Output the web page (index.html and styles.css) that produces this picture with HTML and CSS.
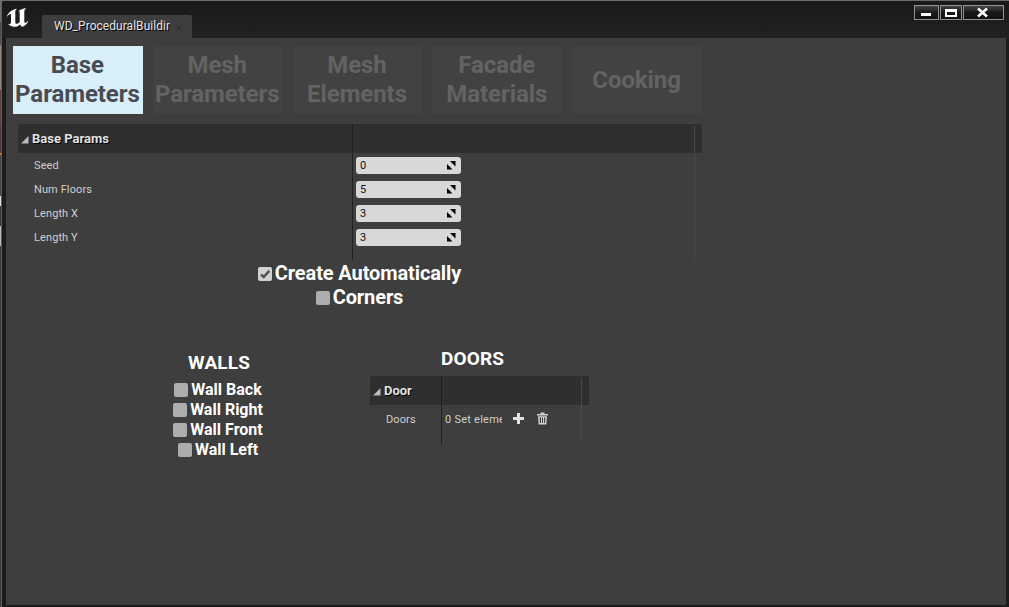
FILE: index.html
```html
<!DOCTYPE html>
<html lang="en">
<head>
<meta charset="utf-8">
<title>WD_ProceduralBuilding</title>
<link rel="stylesheet" href="styles.css">
</head>
<body>
<div class="desktop">
<div class="window">
  <header class="titlebar">
    <svg class="logo" width="24" height="22" viewBox="0 0 24 22"><path fill="#fff" d="M.5 9.500C2 4.500 6 1.500 11 .8C9 2.500 9.300 3.500 9.300 5V14.500C9.300 16.300 11.800 16.300 13.700 14V4.500C13.700 3.300 13 3 12 3.500C14 1.500 17 .5 20.500 0C18.500 1.500 18.300 2.500 18.300 4V13.500C18.300 15.500 20 15.300 22.500 12.500C21.500 15.500 19 18 16 19L14 16.500C12 18.500 9.500 19.300 6.500 18.600C4.500 18 3.500 17 2 16C4.300 16.300 5 15.500 5 13.500V7C5 4.800 2.500 6.500 .5 9.500Z"/></svg>
    <div class="doc-tab"><span class="doc-name">WD_ProceduralBuilding</span>
      <svg class="doc-close" width="6" height="6" viewBox="0 0 6 6"><path d="M.5 .5L5.500 5.500M5.500 .5L.5 5.500"/></svg>
    </div>
    <div class="controls">
      <div class="control"><svg width="24" height="15" viewBox="0 0 24 15"><path fill="#fff" d="M7 8h10v3H7z"/></svg></div>
      <div class="control control-max"><svg width="21" height="15" viewBox="0 0 21 15"><path fill="#fff" fill-rule="evenodd" d="M5 4h12v8H5zM7 7v3h8V7z"/></svg></div>
      <div class="control control-close"><svg width="40" height="15" viewBox="0 0 40 15"><path fill="none" stroke="#fff" stroke-width="2.600" d="M15 3.500L24 11.500M24 3.500L15 11.500"/></svg></div>
    </div>
  </header>
  <main class="content">
    <nav class="tabs">
      <div class="tab active">Base<br>Parameters</div>
      <div class="tab">Mesh<br>Parameters</div>
      <div class="tab">Mesh<br>Elements</div>
      <div class="tab">Facade<br>Materials</div>
      <div class="tab">Cooking</div>
    </nav>
    <section class="details base">
      <div class="details-header"><svg class="arrow" width="8" height="8" viewBox="0 0 8 8"><path d="M7.500 0V7.500H0z"/></svg><span>Base Params</span></div>
      <div class="row"><span class="label">Seed</span><div class="number">0<svg width="9" height="9" viewBox="0 0 9 9"><path d="M3 0H8.500V5.500zM0 3V8.500H5.500z"/></svg></div></div>
      <div class="row"><span class="label">Num Floors</span><div class="number">5<svg width="9" height="9" viewBox="0 0 9 9"><path d="M3 0H8.500V5.500zM0 3V8.500H5.500z"/></svg></div></div>
      <div class="row"><span class="label">Length X</span><div class="number">3<svg width="9" height="9" viewBox="0 0 9 9"><path d="M3 0H8.500V5.500zM0 3V8.500H5.500z"/></svg></div></div>
      <div class="row"><span class="label">Length Y</span><div class="number">3<svg width="9" height="9" viewBox="0 0 9 9"><path d="M3 0H8.500V5.500zM0 3V8.500H5.500z"/></svg></div></div>
    </section>
    <section class="options">
      <div class="option"><span class="box checked"><svg width="14" height="14" viewBox="0 0 14 14"><path d="M3 7.500L5.700 10L11.300 3.800"/></svg></span><span>Create Automatically</span></div>
      <div class="option"><span class="box"></span><span>Corners</span></div>
    </section>
    <div class="columns">
      <section class="walls">
        <h2>WALLS</h2>
        <div class="option"><span class="box"></span><span>Wall Back</span></div>
        <div class="option"><span class="box"></span><span>Wall Right</span></div>
        <div class="option"><span class="box"></span><span>Wall Front</span></div>
        <div class="option"><span class="box"></span><span>Wall Left</span></div>
      </section>
      <section class="doors">
        <h2>DOORS</h2>
        <div class="details door">
          <div class="details-header"><svg class="arrow" width="8" height="8" viewBox="0 0 8 8"><path d="M7.500 0V7.500H0z"/></svg><span>Door</span></div>
          <div class="row"><span class="label">Doors</span><span class="count">0 Set elements</span>
            <svg class="plus" width="11" height="11" viewBox="0 0 11 11"><path d="M4 0h3v4h4v3H7v4H4V7H0V4h4z"/></svg>
            <svg class="trash" width="11" height="13" viewBox="0 0 11 13"><path fill-rule="evenodd" d="M3.500 .5h4V2H11v1.500H0V2H3.500zM1 4.300h9L9.300 12.500H1.700zM2.600 5.500L3 11h1V5.500zM5 5.500V11h1V5.500zM7.100 5.500V11h.9L8.400 5.500z"/></svg>
          </div>
        </div>
      </section>
    </div>
  </main>
</div>
</div>
</body>
</html>
```
FILE: styles.css
```css
* { box-sizing: border-box; }
body { margin: 0; font-family: Roboto, sans-serif; color: #fff; overflow: hidden; }
svg { display: block; flex: none; }
.desktop {
  width: 1009px; height: 607px; padding-left: 1px;
  background: linear-gradient(#77706a 0 22px, #514b47 22px 45px, #918780 45px 90px, #5b4039 90px 125px, #4b3434 125px 153px, #c79a20 153px 155px, #444 155px 196px, #ddd 196px 206px, #333 206px 226px, #bbb 226px 246px, #393939 246px);
}
.window {
  display: flex; flex-direction: column;
  width: 1008px; height: 607px; padding: 0 3px 2px 4px;
  border-left: 1px solid #5e5e5e; border-top: 1px solid #6a6a6a;
  border-top-left-radius: 3px;
  background: #1c1c1c linear-gradient(#191919, #212121 36px, #1b1b1b 38px);
}
.titlebar { display: flex; height: 37px; flex: none; }
.logo { margin: 7px 0 0 0; }
.doc-tab {
  display: flex; align-items: center; width: 150px; height: 23px;
  margin: 14px 0 0 12px; padding-left: 12px; background: #3e3e3e; border-radius: 2px 2px 0 0;
}
.doc-name { width: 116px; margin-top: -2px; overflow: hidden; white-space: nowrap; font-size: 12px; letter-spacing: .04px; line-height: 16px; color: #e4e4e4; text-shadow: 1px 1px 0 #000; }
.doc-close { margin: 2px 0 0 6px; fill: none; stroke: #262626; stroke-width: 1; }
.controls { display: flex; gap: 1px; margin: 4px 2px 0 auto; height: 15px; }
.control { width: 25px; height: 15px; overflow: hidden; background: linear-gradient(#4b4b4b, #191919 50%, #111); box-shadow: inset 0 0 0 1px #929292; }
.control-max { width: 22px; }
.control-close { width: 41px; }
.content { flex: 1; background: #3e3e3e; padding: 8px 0 0 7px; }
.tabs { display: grid; grid-template-columns: repeat(5, 1fr); gap: 10px; width: 689px; height: 68px; }
.tab {
  display: flex; align-items: center; justify-content: center; text-align: center; white-space: nowrap;
  background: #424242; color: #636363; font-size: 24px; font-weight: 700; line-height: 29px; letter-spacing: -.08px;
  padding-right: 1px;
}
.active { background: #d8eef9; color: #494b52; }
.details {
  position: relative;
}
.details::before, .details::after { content: ""; position: absolute; width: 1px; z-index: 1; }
.details::before { top: 0; bottom: 0; background: #202020; }
.details::after { top: 2px; bottom: 0; right: 7px; background: #484848; }
.base { width: 684px; height: 136px; margin: 10px 0 0 5px; }
.base::before { left: 334px; }
.details-header {
  display: flex; align-items: center; gap: 3px; height: 29px; padding-left: 3px; border-radius: 3px 3px 0 0;
  background: #2f2f2f; color: #e2e2e2; font-size: 13px; font-weight: 700; text-shadow: 1px 1px 0 #000;
}
.arrow { margin-top: 2px; fill: #bcbcbc; }
.row { display: flex; align-items: center; height: 24px; padding-left: 16px; font-size: 11px; letter-spacing: .1px; color: #cecece; }
.base .label { width: 322px; }
.number {
  display: flex; align-items: center; justify-content: space-between; width: 105px; height: 17px;
  padding: 0 5px 0 4px; border-radius: 3px; background: #d8d8d8; color: #111;
}
.options { width: 689px; padding: 1px 0 0 4px; }
.option { display: flex; align-items: center; justify-content: center; gap: 3px; font-weight: 700; white-space: nowrap; }
.options .option { height: 24px; font-size: 20px; letter-spacing: -.11px; }
.box { width: 14px; height: 14px; border-radius: 2px; background: #adadad; flex: none; margin-top: 1px; }
.checked { background: #d2d2d2; }
.checked path { fill: none; stroke: #555; stroke-width: 2.600; }
.columns { display: flex; }
h2 { margin: 0; font-size: 19px; line-height: 22px; font-weight: 700; text-align: center; letter-spacing: .15px; }
.walls { width: 110px; margin: 43px 0 0 150px; }
.walls h2 { margin-bottom: 5px; padding-left: 2px; }
.walls .option { height: 20px; font-size: 16px; }
.doors { width: 219px; margin: 39px 0 0 97px; }
.doors h2 { margin-bottom: 6px; padding-right: 14px; }
.door { width: 219px; height: 68px; }
.door::before { left: 71px; }
.door .row { height: 28px; }
.door .label { width: 59px; }
.count { width: 57px; letter-spacing: .25px; overflow: hidden; white-space: nowrap; }
.plus { margin: -1px 0 0 11px; fill: #e2e2e2; }
.trash { margin: -1px 0 0 13px; fill: #d2d2d2; }
```
